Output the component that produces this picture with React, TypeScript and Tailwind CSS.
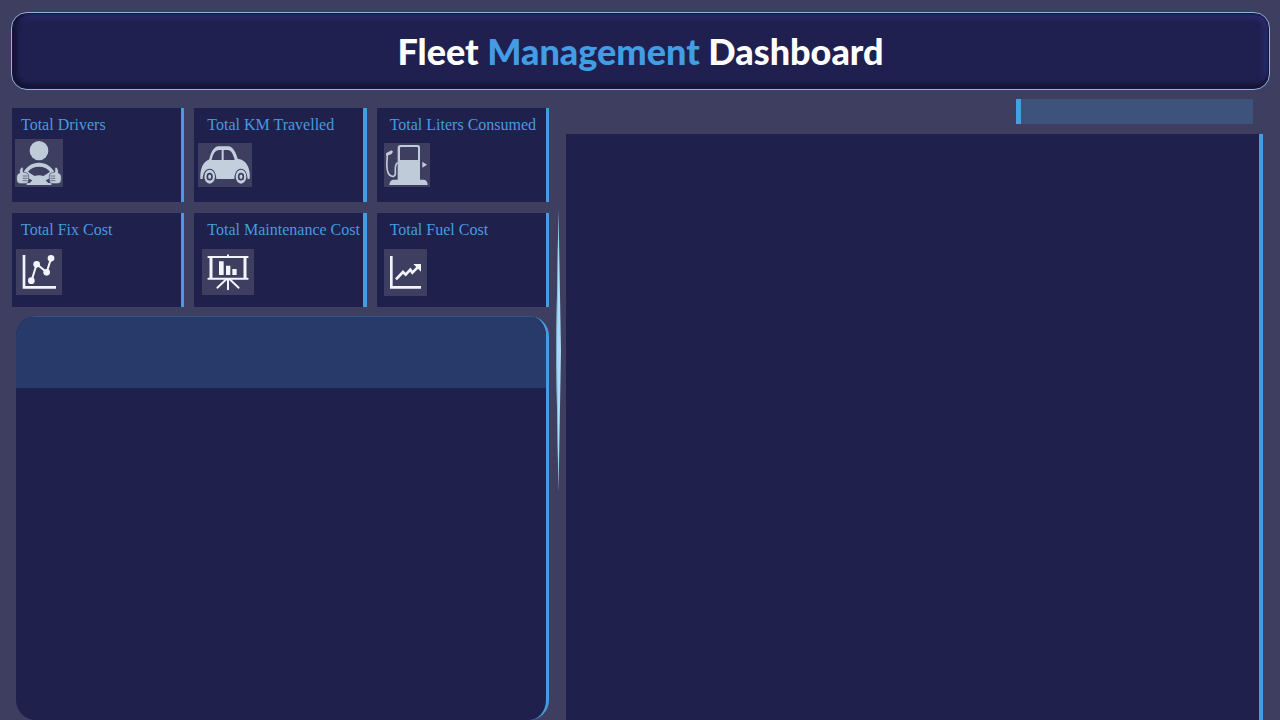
import type { ReactNode } from "react";

function DriverIcon() {
  return (
    <svg viewBox="0 0 144 144" className="h-full w-full" aria-hidden="true">
      <g fill="#bfcbd9">
        <ellipse cx="72" cy="35" rx="28" ry="29" />
        <path
          fillRule="evenodd"
          d="M24 102C34 82 51 71 72 71s38 11 48 31l-8 22-3 14H35l-3-14zM39 98c6 5 13 9 20 13 8-3 18-3 26 0 7-4 14-8 20-13C97 87 86 83 72 83S47 87 39 98z"
        />
      </g>
      <path d="M38 118l14 6-8 8h-6zM106 118l-14 6 8 8h6z" fill="#3d3e60" />
      <g fill="#bfcbd9" stroke="#3d3e60" strokeWidth="2">
        <path d="M14 102c-1-7 1-15 7-18 4 1 4 6 3 15l8 2c6 1 9 5 9 11v10c0 8-4 12-11 12H18c-8 0-13-4-13-12v-8c0-6 4-10 9-12z" />
        <path d="M130 102c1-7-1-15-7-18-4 1-4 6-3 15l-8 2c-6 1-9 5-9 11v10c0 8 4 12 11 12h12c8 0 13-4 13-12v-8c0-6-4-10-9-12z" />
      </g>
      <path d="M23 111h15M23 118h15M23 125h15M106 111h15M106 118h15M106 125h15" stroke="#3d3e60" strokeWidth="2" />
    </svg>
  );
}

function CarIcon() {
  return (
    <svg viewBox="0 0 162 132" className="h-full w-full" aria-hidden="true">
      <path
        fill="#c4cfde"
        d="M7 108C6 76 15 57 34 49 39 26 48 11 62 10h29c13 1 22 16 28 37 18 3 27 12 32 26 4 11 5 22 4 34l-6 2c-1-21-9-32-20-32-12 0-19 11-20 31H55C54 88 47 77 35 77s-20 11-21 31z"
      />
      <path d="M41 51c4-19 11-30 23-30h7v30zM77 21h12c10 0 17 12 21 30H77z" fill="#3d3e60" />
      <g fill="#c4cfde">
        <ellipse cx="35" cy="101" rx="16" ry="21" />
        <ellipse cx="129" cy="101" rx="16" ry="21" />
      </g>
      <g fill="none" stroke="#3d3e60" strokeWidth="5">
        <ellipse cx="35" cy="101" rx="7" ry="9" />
        <ellipse cx="129" cy="101" rx="7" ry="9" />
      </g>
    </svg>
  );
}

function PumpIcon() {
  return (
    <svg viewBox="0 0 138 132" className="h-full w-full" aria-hidden="true">
      <path
        fill="#bfcbd9"
        fillRule="evenodd"
        d="M49 6h52q7 0 7 8v96h12q11 2 11 16H16q1-14 11-16h14V14q0-8 8-8zm-1 9v36h54V15q0-3-3-3H51q-3 0-3 3z"
      />
      <path
        d="M10 33c0 18-5 38 2 55 4 14 20 16 22 5 1-12-4-29 7-34"
        fill="none"
        stroke="#bfcbd9"
        strokeWidth="5"
      />
      <path d="M6 31l17-9 4 4-5 8-15 4zM115 56l14 9-14 9z" fill="#bfcbd9" />
    </svg>
  );
}

function ScatterIcon() {
  return (
    <svg viewBox="0 0 138 138" className="h-full w-full" aria-hidden="true">
      <g fill="none" stroke="#f4f4fb">
        <path d="M24 18v97h96" strokeWidth="8" />
        <path d="M47 94l15-49 30 25 13-41" strokeWidth="6" />
      </g>
      <g fill="#f4f4fb">
        <circle cx="46" cy="95" r="10" />
        <circle cx="62" cy="46" r="10" />
        <circle cx="92" cy="70" r="10" />
        <circle cx="105" cy="28" r="10" />
      </g>
    </svg>
  );
}

function BoardIcon() {
  return (
    <svg viewBox="0 0 156 138" className="h-full w-full" aria-hidden="true">
      <g fill="none" stroke="#f4f4fb" strokeWidth="6" strokeLinecap="round">
        <path d="M19 24h118M19 89h118" />
        <path d="M27 24v64M129 24v64" strokeWidth="9" strokeLinecap="butt" />
        <path d="M78 19v5M78 91v30M73 91l-27 25M83 91l27 25" />
      </g>
      <path d="M51 37h14v41H51zM72 50h13v28H72zM91 60h13v18H91z" fill="#f4f4fb" />
    </svg>
  );
}

function TrendIcon() {
  return (
    <svg viewBox="0 0 129 141" className="h-full w-full" aria-hidden="true">
      <g fill="none" stroke="#f4f4fb">
        <path d="M22 21v94h89" strokeWidth="8" />
        <path d="M36 91l21-22 8 8 14-15 6 9 19-19" strokeWidth="8" />
      </g>
      <path d="M88 45h23v23z" fill="#f4f4fb" />
    </svg>
  );
}

type CardProps = { label: string; labelClass: string; tileClass: string; edgeClass: string; icon: ReactNode };

const cards: CardProps[] = [
  { label: "Total Drivers", labelClass: "pl-[9px]", tileClass: "ml-[3px] mt-1 h-12 w-12", edgeClass: "border-r-3", icon: <DriverIcon /> },
  { label: "Total KM Travelled", labelClass: "pl-[13px]", tileClass: "ml-1 mt-2 h-11 w-[54px]", edgeClass: "border-r-4", icon: <CarIcon /> },
  { label: "Total Liters Consumed", labelClass: "pl-[13px]", tileClass: "ml-[7px] mt-2 h-11 w-[46px]", edgeClass: "border-r-3", icon: <PumpIcon /> },
  { label: "Total Fix Cost", labelClass: "pl-[9px]", tileClass: "ml-1 mt-[9px] h-[46px] w-[46px]", edgeClass: "border-r-3", icon: <ScatterIcon /> },
  { label: "Total Maintenance Cost", labelClass: "pl-[13px]", tileClass: "ml-2 mt-[9px] h-[46px] w-[52px]", edgeClass: "border-r-4", icon: <BoardIcon /> },
  { label: "Total Fuel Cost", labelClass: "pl-[13px]", tileClass: "ml-[7px] mt-[9px] h-[47px] w-[43px]", edgeClass: "border-r-3", icon: <TrendIcon /> },
];

function StatCard({ label, labelClass, tileClass, edgeClass, icon }: CardProps) {
  return (
    <article className={`min-h-[94px] border-[#459cdf] bg-[#1f204c] pt-[7px] ${edgeClass}`}>
      <h2 className={`whitespace-nowrap text-base leading-5 text-[#459cdf] ${labelClass}`}>{label}</h2>
      <div className={`bg-[#3d3e60] ${tileClass}`}>{icon}</div>
    </article>
  );
}

export default function App() {
  return (
    <div className="flex min-h-screen flex-col bg-[#3d3e60] pt-3 font-['Liberation_Serif',serif]">
      <header className="mr-[10px] ml-[11px] flex min-h-[78px] items-center justify-center rounded-2xl border border-[#8fb3dc] bg-[#1f204f] shadow-[inset_0_0_0_1px_#17163c,inset_5px_0_4px_#151434,inset_0_-5px_4px_#151434,inset_-6px_0_5px_#2b286b,inset_0_6px_5px_#2b286b]">
        <h1 className="font-['Britannic_Bold','Lato',sans-serif] text-4xl font-black text-white">
          Fleet <span className="text-[#429de5]">Management</span> Dashboard
        </h1>
      </header>

      <main className="grid flex-1 grid-cols-[537fr_17px_697fr] pt-[9px] pr-[17px] pl-3">
        <div className="flex min-w-0 flex-col gap-[9px] pt-[9px]">
          <section className="grid grid-cols-3 gap-x-[10px] gap-y-[11px]">
            {cards.map((card) => (
              <StatCard key={card.label} {...card} />
            ))}
          </section>
          <section className="ml-1 flex-1 overflow-hidden rounded-[20px] border-r-3 border-[#459cdf] bg-[#1f204c]">
            <div className="h-[72px] border-t border-[#3a5580] bg-[#283a69]" />
          </section>
        </div>

        <div className="pt-[111px] pl-[7px]">
          <svg viewBox="0 0 5 282" className="h-[282px] w-[5px]" aria-hidden="true">
            <path d="M2.5 0L5 141 2.5 282 0 141z" fill="#a6daf5" />
            <path d="M2.5 0L1 141 2.5 282 0 141z" fill="#71a9d2" />
          </svg>
        </div>

        <div className="flex min-w-0 flex-col items-end gap-[10px]">
          <div className="mr-[10px] h-[25px] w-[34%] border-l-5 border-[#459fe2] bg-[#3e537c]" />
          <section className="w-full flex-1 border-r-4 border-[#459cdf] bg-[#1f204c]" />
        </div>
      </main>
    </div>
  );
}
